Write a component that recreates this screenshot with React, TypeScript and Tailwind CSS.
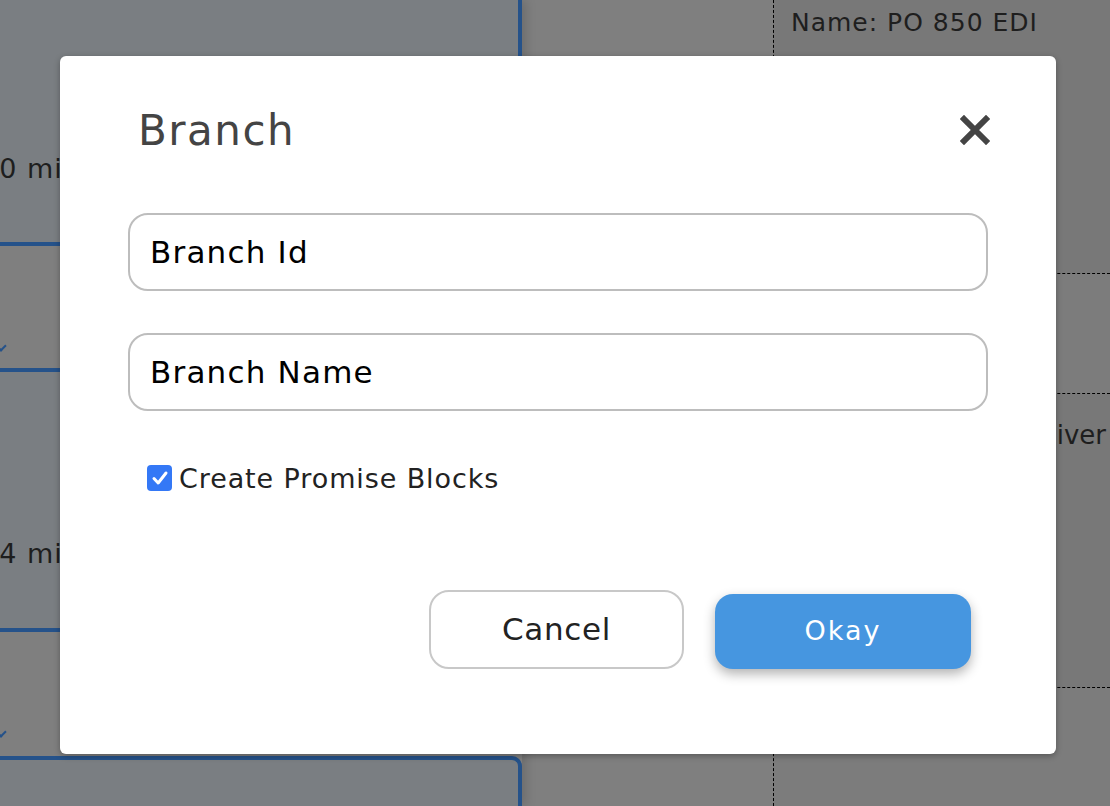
import React from 'react';

const font = { fontFamily: '"DejaVu Sans", sans-serif' };

function LeftColumn() {
  return (
    <div className="w-[522px] shrink-0 flex flex-col bg-[#7f7f7f] shadow-[4px_0_10px_rgba(0,0,0,0.15)] z-10">
      <div className="h-[246px] shrink-0 bg-[#7a7e82] border-r-4 border-b-4 border-[#25528a] rounded-br-[10px] flex items-end pb-[53px]">
        <span className="-ml-[19px] text-[27px] tracking-[1px] text-[#1e1e1e]">10 min</span>
      </div>
      <div className="h-[122px] shrink-0 flex items-end pb-[18px]">
        <span className="-ml-[3px] w-[8px] h-[8px] border-b-2 border-r-2 border-[#25528a] rotate-45" />
      </div>
      <div className="h-[264px] shrink-0 bg-[#7a7e82] border-4 border-l-0 border-[#25528a] rounded-r-[10px] flex items-end pb-[54px]">
        <span className="-ml-[19px] text-[27px] tracking-[1px] text-[#1e1e1e]">14 min</span>
      </div>
      <div className="h-[124px] shrink-0 flex items-end pb-[20px]">
        <span className="-ml-[3px] w-[8px] h-[8px] border-b-2 border-r-2 border-[#25528a] rotate-45" />
      </div>
      <div className="flex-1 bg-[#7a7e82] border-4 border-l-0 border-b-0 border-[#25528a] rounded-tr-[10px]" />
    </div>
  );
}

function RightColumn() {
  return (
    <div className="flex-1 flex">
      <div className="w-[251px] shrink-0 bg-[#7f7f7f]" />
      <div className="flex-1 border-l border-dashed border-black bg-[#787878] flex flex-col">
        <div className="h-[274px] shrink-0 border-b border-dashed border-black px-[17px] pt-[4px] text-[25px] tracking-[1px] text-[#1e1e1e]">
          Name: PO 850 EDI
        </div>
        <div className="h-[120px] shrink-0 border-b border-dashed border-black bg-[#7c7c7c]" />
        <div className="h-[294px] shrink-0 border-b border-dashed border-black flex justify-end pr-[4px] pt-[22px] text-[26px] text-[#1e1e1e]">
          Receiver
        </div>
        <div className="flex-1 bg-[#7c7c7c]" />
      </div>
    </div>
  );
}

function Modal() {
  return (
    <div className="absolute z-20 left-[60px] top-[56px] w-[996px] h-[698px] bg-white rounded-[6px] shadow-[0_2px_6px_rgba(0,0,0,0.3)] flex flex-col px-[68px]">
      <div className="flex items-center justify-between mt-[58px] h-[34px] shrink-0 pl-[10px]">
        <h2 className="text-[42px] tracking-[1.5px] text-[#444] font-normal leading-none">Branch</h2>
        <svg width="30" height="30" viewBox="0 0 30 30" className="mr-[-2px] mt-[-2px]">
          <path d="M4 4 L26 26 M26 4 L4 26" stroke="#444" strokeWidth="6" strokeLinecap="square" />
        </svg>
      </div>
      <div className="flex flex-col gap-[42px] mt-[65px]">
        <div className="h-[78px] rounded-[20px] border-2 border-[#bdbdbd] flex items-center px-[20px] text-[31px] tracking-[1.2px] text-black">
          Branch Id
        </div>
        <div className="h-[78px] rounded-[20px] border-2 border-[#bdbdbd] flex items-center px-[20px] text-[31px] tracking-[1.2px] text-black">
          Branch Name
        </div>
      </div>
      <label className="flex items-center gap-[7px] mt-[54px] ml-[19px] h-[26px]">
        <span className="w-[25px] h-[26px] rounded-[4px] bg-[#3478f6] flex items-center justify-center">
          <svg width="18" height="18" viewBox="0 0 18 18">
            <path d="M3 9.5 L7.2 14 L15 4" stroke="white" strokeWidth="3" fill="none" strokeLinecap="round" strokeLinejoin="round" />
          </svg>
        </span>
        <span className="text-[27px] tracking-[0.9px] text-[#222] leading-none">Create Promise Blocks</span>
      </label>
      <div className="flex items-start justify-end gap-[31px] mt-[99px] pr-[17px]">
        <button className="w-[255px] h-[79px] rounded-[20px] border-2 border-[#c8c8c8] bg-white text-[31px] tracking-[0.7px] text-[#222]">
          Cancel
        </button>
        <button className="w-[256px] h-[75px] mt-[4px] rounded-[18px] bg-[#4696e0] text-white text-[27px] tracking-[2px] shadow-[0_5px_12px_rgba(0,0,0,0.3)]">
          Okay
        </button>
      </div>
    </div>
  );
}

export default function App() {
  return (
    <div className="relative w-[1110px] h-[806px] overflow-hidden flex" style={font}>
      <LeftColumn />
      <RightColumn />
      <Modal />
    </div>
  );
}
